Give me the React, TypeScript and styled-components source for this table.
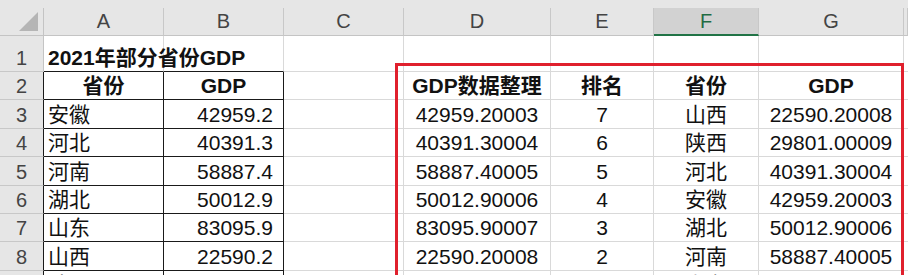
import React from "react";
import styled, { createGlobalStyle, css } from "styled-components";

const Global = createGlobalStyle`
  html, body { margin: 0; padding: 0; background: #ffffff; }
  body { font-family: "Liberation Sans", "Noto Sans CJK SC", sans-serif; }
`;

const COLS = "44px 120px 120px 120px 147px 103px 105px 145px 1fr";
const ROW_HEIGHTS = [36, 28, 29, 28, 29, 28, 28, 29, 28];

const Sheet = styled.div`
  position: relative;
  width: 908px;
  height: 275px;
  overflow: hidden;
  background: #ffffff;
`;

const TopStrip = styled.div`
  height: 8px;
  background: #e6e6e6;
`;

const HeaderRow = styled.div`
  display: grid;
  grid-template-columns: ${COLS};
  height: 28px;
  background: #e6e6e6;
`;

const Corner = styled.div`
  display: flex;
  align-items: flex-end;
  justify-content: flex-end;
  padding: 0 5px 4px 0;
  border-right: 1px solid #c4c4c4;
  border-bottom: 1px solid #c4c4c4;
  box-sizing: border-box;
`;

const ColHead = styled.div<{ $selected?: boolean }>`
  display: flex;
  align-items: flex-end;
  justify-content: center;
  box-sizing: border-box;
  font-size: 20px;
  line-height: 24px;
  padding-bottom: 2px;
  color: #444444;
  border-right: 1px solid #c8c8c8;
  border-bottom: 1px solid #c4c4c4;
  ${(p) =>
    p.$selected &&
    css`
      background: #d2d2d2;
      color: #1f6b43;
      border-bottom: 2px solid #217346;
      padding-bottom: 1px;
    `}
`;

const Row = styled.div<{ $h: number }>`
  display: grid;
  grid-template-columns: ${COLS};
  height: ${(p) => p.$h}px;
`;

const RowHead = styled.div<{ $dark?: boolean }>`
  display: flex;
  align-items: flex-end;
  justify-content: center;
  box-sizing: border-box;
  background: #e6e6e6;
  font-size: 20px;
  line-height: 24px;
  padding-bottom: 1px;
  color: #444444;
  border-right: 1px solid ${(p) => (p.$dark ? "#1a1a1a" : "#c4c4c4")};
  border-bottom: 1px solid #c8c8c8;
`;

type Align = "left" | "center" | "right";

const Cell = styled.div<{
  $align?: Align;
  $bold?: boolean;
  $ruled?: "box" | "top" | "none";
}>`
  display: flex;
  align-items: flex-end;
  justify-content: ${(p) =>
    p.$align === "right" ? "flex-end" : p.$align === "center" ? "center" : "flex-start"};
  box-sizing: border-box;
  padding: 0 10px 1px 4px;
  font-size: 21px;
  line-height: 24px;
  font-weight: ${(p) => (p.$bold ? 700 : 400)};
  color: #111111;
  white-space: nowrap;
  overflow: visible;
  border-right: 1px solid #d9d9d9;
  border-bottom: 1px solid #d9d9d9;
  ${(p) =>
    p.$align === "center" &&
    css`
      padding-left: 0;
      padding-right: 0;
    `}
  ${(p) =>
    p.$ruled === "box" &&
    css`
      border-right-color: #1a1a1a;
      border-bottom-color: #1a1a1a;
    `}
  ${(p) =>
    p.$ruled === "top" &&
    css`
      border-bottom-color: #1a1a1a;
    `}
`;

const Highlight = styled.div`
  position: absolute;
  left: 395px;
  top: 63px;
  width: 509px;
  height: 260px;
  box-sizing: border-box;
  border: 3px solid #e0202d;
  pointer-events: none;
`;

type CellSpec = { t: string; a?: Align; b?: boolean };

const rows: CellSpec[][] = [
  [{ t: "2021年部分省份GDP", a: "left", b: true }, { t: "" }, { t: "" }, { t: "" }, { t: "" }, { t: "" }, { t: "" }, { t: "" }],
  [
    { t: "省份", a: "center", b: true },
    { t: "GDP", a: "center", b: true },
    { t: "" },
    { t: "GDP数据整理", a: "center", b: true },
    { t: "排名", a: "center", b: true },
    { t: "省份", a: "center", b: true },
    { t: "GDP", a: "center", b: true },
    { t: "" },
  ],
  ...[
    ["安徽", "42959.2", "42959.20003", "7", "山西", "22590.20008"],
    ["河北", "40391.3", "40391.30004", "6", "陕西", "29801.00009"],
    ["河南", "58887.4", "58887.40005", "5", "河北", "40391.30004"],
    ["湖北", "50012.9", "50012.90006", "4", "安徽", "42959.20003"],
    ["山东", "83095.9", "83095.90007", "3", "湖北", "50012.90006"],
    ["山西", "22590.2", "22590.20008", "2", "河南", "58887.40005"],
    ["陕西", "29801", "29801.00009", "1", "山东", "83095.90007"],
  ].map((r) => [
    { t: r[0], a: "left" as Align },
    { t: r[1], a: "right" as Align },
    { t: "" },
    { t: r[2], a: "center" as Align },
    { t: r[3], a: "center" as Align },
    { t: r[4], a: "center" as Align },
    { t: r[5], a: "center" as Align },
    { t: "" },
  ]),
];

const letters = ["A", "B", "C", "D", "E", "F", "G", ""];

export default function App() {
  return (
    <>
      <Global />
      <Sheet>
        <TopStrip />
        <HeaderRow>
          <Corner>
            <svg width="19" height="19" viewBox="0 0 19 19">
              <polygon points="19,0 19,19 0,19" fill="#b5b5b5" />
            </svg>
          </Corner>
          {letters.map((l, i) => (
            <ColHead key={i} $selected={l === "F"}>
              {l}
            </ColHead>
          ))}
        </HeaderRow>
        {rows.map((cells, ri) => (
          <Row key={ri} $h={ROW_HEIGHTS[ri]}>
            <RowHead $dark={ri >= 1}>{ri + 1}</RowHead>
            {cells.map((c, ci) => (
              <Cell
                key={ci}
                $align={c.a}
                $bold={c.b}
                $ruled={ci < 2 ? (ri === 0 ? "top" : "box") : "none"}
              >
                {c.t}
              </Cell>
            ))}
          </Row>
        ))}
        <Highlight />
      </Sheet>
    </>
  );
}
